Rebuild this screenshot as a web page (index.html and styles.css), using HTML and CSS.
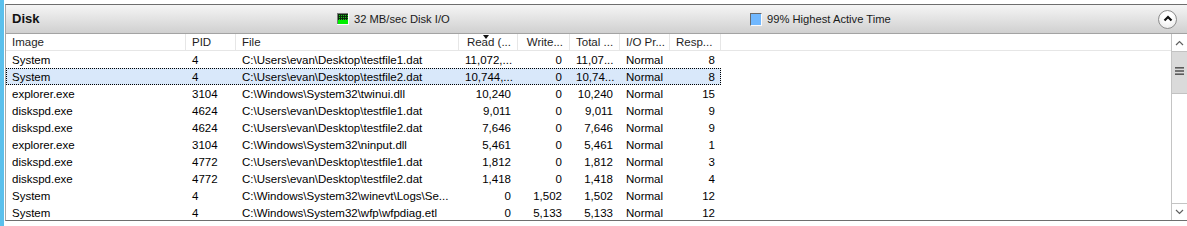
FILE: index.html
```html
<!DOCTYPE html>
<html>
<head>
<meta charset="utf-8">
<link rel="stylesheet" href="styles.css">
</head>
<body>
<div class="app">
  <div class="strip"></div>
  <div class="panel">
    <div class="head">
      <div class="title">Disk</div>
      <div class="legend legend-io">
        <svg class="ico" width="12" height="12" viewBox="0 0 12 12">
          <defs>
            <pattern id="dots" width="2" height="2" patternUnits="userSpaceOnUse">
              <rect width="2" height="2" fill="#0a2a0a"/>
              <rect width="1" height="1" fill="#19c419"/>
            </pattern>
          </defs>
          <rect x="0" y="0" width="12" height="12" fill="#ffffff"/>
          <rect x="0" y="0" width="11" height="11" fill="#7a7a7a"/>
          <rect x="1" y="1" width="10" height="10" fill="url(#dots)"/>
          <rect x="1" y="7" width="10" height="4" fill="#00f000"/>
        </svg>
        <span>32 MB/sec Disk I/O</span>
      </div>
      <div class="legend legend-active">
        <span class="ico-blue"></span>
        <span>99% Highest Active Time</span>
      </div>
      <div class="collapse">
        <svg width="10" height="7" viewBox="0 0 10 7"><path d="M1.5 5.5 L5 2 L8.5 5.5" fill="none" stroke="#111" stroke-width="2.2"/></svg>
      </div>
    </div>
    <div class="body">
      <div class="grid">
        <div class="row hdr">
          <div class="c">Image</div>
          <div class="c">PID</div>
          <div class="c">File</div>
          <div class="c r sorted">Read (...<span class="sort-arrow"></span></div>
          <div class="c r">Write...</div>
          <div class="c">Total ...</div>
          <div class="c">I/O Pr...</div>
          <div class="c">Resp...</div>
        </div>
        <div class="row">
          <div class="c">System</div><div class="c">4</div><div class="c">C:\Users\evan\Desktop\testfile1.dat</div><div class="c r">11,072,...</div><div class="c r w">0</div><div class="c t">11,07...</div><div class="c io">Normal</div><div class="c r">8</div>
        </div>
        <div class="row sel">
          <div class="c">System</div><div class="c">4</div><div class="c">C:\Users\evan\Desktop\testfile2.dat</div><div class="c r">10,744,...</div><div class="c r w">0</div><div class="c t">10,74...</div><div class="c io">Normal</div><div class="c r">8</div>
        </div>
        <div class="row">
          <div class="c">explorer.exe</div><div class="c">3104</div><div class="c">C:\Windows\System32\twinui.dll</div><div class="c r">10,240</div><div class="c r w">0</div><div class="c r">10,240</div><div class="c io">Normal</div><div class="c r">15</div>
        </div>
        <div class="row">
          <div class="c">diskspd.exe</div><div class="c">4624</div><div class="c">C:\Users\evan\Desktop\testfile1.dat</div><div class="c r">9,011</div><div class="c r w">0</div><div class="c r">9,011</div><div class="c io">Normal</div><div class="c r">9</div>
        </div>
        <div class="row">
          <div class="c">diskspd.exe</div><div class="c">4624</div><div class="c">C:\Users\evan\Desktop\testfile2.dat</div><div class="c r">7,646</div><div class="c r w">0</div><div class="c r">7,646</div><div class="c io">Normal</div><div class="c r">9</div>
        </div>
        <div class="row">
          <div class="c">explorer.exe</div><div class="c">3104</div><div class="c">C:\Windows\System32\ninput.dll</div><div class="c r">5,461</div><div class="c r w">0</div><div class="c r">5,461</div><div class="c io">Normal</div><div class="c r">1</div>
        </div>
        <div class="row">
          <div class="c">diskspd.exe</div><div class="c">4772</div><div class="c">C:\Users\evan\Desktop\testfile1.dat</div><div class="c r">1,812</div><div class="c r w">0</div><div class="c r">1,812</div><div class="c io">Normal</div><div class="c r">3</div>
        </div>
        <div class="row">
          <div class="c">diskspd.exe</div><div class="c">4772</div><div class="c">C:\Users\evan\Desktop\testfile2.dat</div><div class="c r">1,418</div><div class="c r w">0</div><div class="c r">1,418</div><div class="c io">Normal</div><div class="c r">4</div>
        </div>
        <div class="row">
          <div class="c">System</div><div class="c">4</div><div class="c">C:\Windows\System32\winevt\Logs\Se...</div><div class="c r">0</div><div class="c r w">1,502</div><div class="c r">1,502</div><div class="c io">Normal</div><div class="c r">12</div>
        </div>
        <div class="row">
          <div class="c">System</div><div class="c">4</div><div class="c">C:\Windows\System32\wfp\wfpdiag.etl</div><div class="c r">0</div><div class="c r w">5,133</div><div class="c r">5,133</div><div class="c io">Normal</div><div class="c r">12</div>
        </div>
      </div>
      <div class="scroll">
        <div class="sb-btn">
          <svg width="9" height="6" viewBox="0 0 9 6"><path d="M1 5 L4.5 1.5 L8 5" fill="none" stroke="#606060" stroke-width="1.2"/></svg>
        </div>
        <div class="thumb">
          <svg width="9" height="8" viewBox="0 0 9 8"><rect x="0" y="0" width="9" height="1.6" fill="#5a5a5a"/><rect x="0" y="3.2" width="9" height="1.6" fill="#5a5a5a"/><rect x="0" y="6.4" width="9" height="1.6" fill="#5a5a5a"/></svg>
        </div>
        <div class="track"></div>
        <div class="sb-btn down">
          <svg width="9" height="6" viewBox="0 0 9 6"><path d="M1 1 L4.5 4.5 L8 1" fill="none" stroke="#606060" stroke-width="1.2"/></svg>
        </div>
      </div>
    </div>
  </div>
</div>
</body>
</html>
```

FILE: styles.css
```css
* { box-sizing: border-box; }
html, body {
  margin: 0;
  padding: 0;
  background: #ffffff;
}
body {
  width: 1187px;
  height: 226px;
  overflow: hidden;
  font-family: "Liberation Sans", Arial, sans-serif;
  font-size: 11.5px;
  color: #000;
}
.app {
  display: flex;
  height: 226px;
}
.strip {
  width: 4px;
  background: #5bc0ec;
  flex: none;
}
.panel {
  flex: 1;
  margin: 4px 0 5px 1px;
  border-top: 1px solid #6e6e6e;
  border-left: 1px solid #a8a8a8;
  border-bottom: 1px solid #6e6e6e;
  display: flex;
  flex-direction: column;
  min-width: 0;
}
.head {
  height: 29px;
  flex: none;
  display: flex;
  align-items: center;
  background: linear-gradient(#f5f5f5, #d0d0d0);
  border-bottom: 1px solid #a3a3a3;
}
.title {
  width: 331px;
  padding-left: 6px;
  font-weight: bold;
  font-size: 13px;
  color: #111;
  padding-bottom: 1px;
}
.legend {
  display: flex;
  align-items: center;
  gap: 5px;
  color: #1a1a1a;
  font-size: 11.2px;
}
.legend-io { width: 413px; }
.legend-active { flex: 1; }
.ico { display: block; flex: none; }
.ico-blue {
  width: 12px;
  height: 13px;
  background: #71b8ff;
  border-left: 1px solid #6a6a6a;
  border-top: 1px solid #6a6a6a;
  border-right: 1px solid #fafafa;
  border-bottom: 1px solid #fafafa;
  flex: none;
}
.collapse {
  width: 19px;
  height: 19px;
  margin-right: 10px;
  border-radius: 50%;
  border: 1px solid #8c8c8c;
  background: radial-gradient(circle at 50% 35%, #ffffff 30%, #e6e6e6 100%);
  display: flex;
  align-items: center;
  justify-content: center;
  flex: none;
}
.collapse svg { display: block; margin-top: -1px; }
.body {
  flex: 1;
  display: flex;
  min-height: 0;
}
.grid {
  flex: 1;
  overflow: hidden;
  min-width: 0;
}
.row {
  display: grid;
  grid-template-columns: 180px 50px 223px 59px 52px 50px 50px 51px;
  width: 715px;
  height: 17px;
  line-height: 16px;
}
.row .c { padding-top: 1px; }
.row.hdr {
  width: 100%;
  height: 17px;
  line-height: 16px;
  border-bottom: 1px solid #e6e6e6;
  color: #1e1e1e;
}
.row.hdr .c { padding-top: 1px; line-height: 15px; }
.hdr .c {
  border-right: 1px solid #e6e6e6;
  position: relative;
}
.c {
  padding: 0 6px;
  white-space: nowrap;
  overflow: hidden;
}
.c.r { text-align: right; padding-right: 6px; }
.c.w { padding-right: 8px; }
.c.t { padding-left: 6px; }
.row:not(.hdr) .c.r:nth-child(4) { padding-right: 7px; }
.row:not(.hdr) .c.r:nth-child(6) { padding-right: 7px; }
.sorted { overflow: visible; }
.sort-arrow {
  position: absolute;
  left: 24px;
  top: 1px;
  width: 0;
  height: 0;
  border-left: 3.5px solid transparent;
  border-right: 3.5px solid transparent;
  border-top: 4px solid #111;
}
.row.sel {
  background: #d9e8fa;
  outline: 1px dotted #000;
  outline-offset: -1px;
}
.scroll {
  width: 16px;
  flex: none;
  border-left: 1px solid #c4c4c4;
  display: flex;
  flex-direction: column;
  background: #ffffff;
}
.sb-btn {
  height: 17px;
  flex: none;
  display: flex;
  align-items: center;
  justify-content: center;
}
.sb-btn.down {
  border-top: 1px solid #c4c4c4;
}
.thumb {
  height: 43px;
  flex: none;
  background: #dadada;
  border-top: 1px solid #c2c2c2;
  border-bottom: 1px solid #c2c2c2;
  display: flex;
  align-items: center;
  justify-content: center;
}
.thumb svg { display: block; margin-bottom: 3px; }
.track { flex: 1; }
```
